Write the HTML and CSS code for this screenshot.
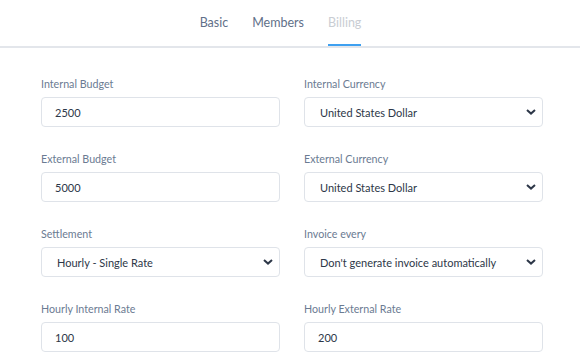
FILE: index.html
```html
<!DOCTYPE html>
<html>
<head>
<meta charset="utf-8">
<link rel="stylesheet" href="styles.css">
</head>
<body>
<nav class="tabs">
  <a class="tab">Basic</a>
  <a class="tab">Members</a>
  <a class="tab active">Billing</a>
</nav>
<form class="form">
  <div class="field">
    <label class="label">Internal Budget</label>
    <div class="control">2500</div>
  </div>
  <div class="field">
    <label class="label">Internal Currency</label>
    <div class="control select">United States Dollar<svg class="chev" viewBox="0 0 10 6" width="10" height="6"><path d="M1 1l4 3.6L9 1" fill="none" stroke="#2d3748" stroke-width="2"/></svg></div>
  </div>
  <div class="field">
    <label class="label">External Budget</label>
    <div class="control">5000</div>
  </div>
  <div class="field">
    <label class="label">External Currency</label>
    <div class="control select">United States Dollar<svg class="chev" viewBox="0 0 10 6" width="10" height="6"><path d="M1 1l4 3.6L9 1" fill="none" stroke="#2d3748" stroke-width="2"/></svg></div>
  </div>
  <div class="field">
    <label class="label">Settlement</label>
    <div class="control select">Hourly - Single Rate<svg class="chev" viewBox="0 0 10 6" width="10" height="6"><path d="M1 1l4 3.6L9 1" fill="none" stroke="#2d3748" stroke-width="2"/></svg></div>
  </div>
  <div class="field">
    <label class="label">Invoice every</label>
    <div class="control select">Don't generate invoice automatically<svg class="chev" viewBox="0 0 10 6" width="10" height="6"><path d="M1 1l4 3.6L9 1" fill="none" stroke="#2d3748" stroke-width="2"/></svg></div>
  </div>
  <div class="field">
    <label class="label">Hourly Internal Rate</label>
    <div class="control">100</div>
  </div>
  <div class="field">
    <label class="label">Hourly External Rate</label>
    <div class="control">200</div>
  </div>
</form>
</body>
</html>
```
FILE: styles.css
```css
* { box-sizing: border-box; }
html, body { margin: 0; background: #fff; }
body {
  font-family: "Lato", "Open Sans", sans-serif;
  color: #2d3748;
}
.tabs {
  display: flex;
  justify-content: center;
  gap: 24px;
  padding-right: 19px;
  height: 48px;
  border-bottom: 2px solid #e3e6eb;
}
.tab {
  display: flex;
  align-items: center;
  padding-top: 1px;
  height: 46px;
  font-size: 12.5px;
  color: #5f7089;
  border-bottom: 2px solid transparent;
}
.tab.active {
  color: #c9cdd3;
  border-bottom-color: #3ea0f0;
}
.form {
  display: grid;
  grid-template-columns: 239px 239px;
  column-gap: 24px;
  row-gap: 24px;
  padding: 28px 0 0 41px;
  margin: 0;
}
.field {
  display: flex;
  flex-direction: column;
  gap: 5px;
}
.label {
  font-size: 10.7px;
  line-height: 16px;
  color: #6b7b92;
}
.control {
  height: 30px;
  border: 1px solid #dfe3e9;
  border-radius: 4px;
  padding: 0 13px;
  display: flex;
  align-items: center;
  font-size: 11px;
  color: #2d3748;
}
.control.select {
  padding: 0 6px 0 15px;
  justify-content: space-between;
}
.chev { flex: none; }
```
